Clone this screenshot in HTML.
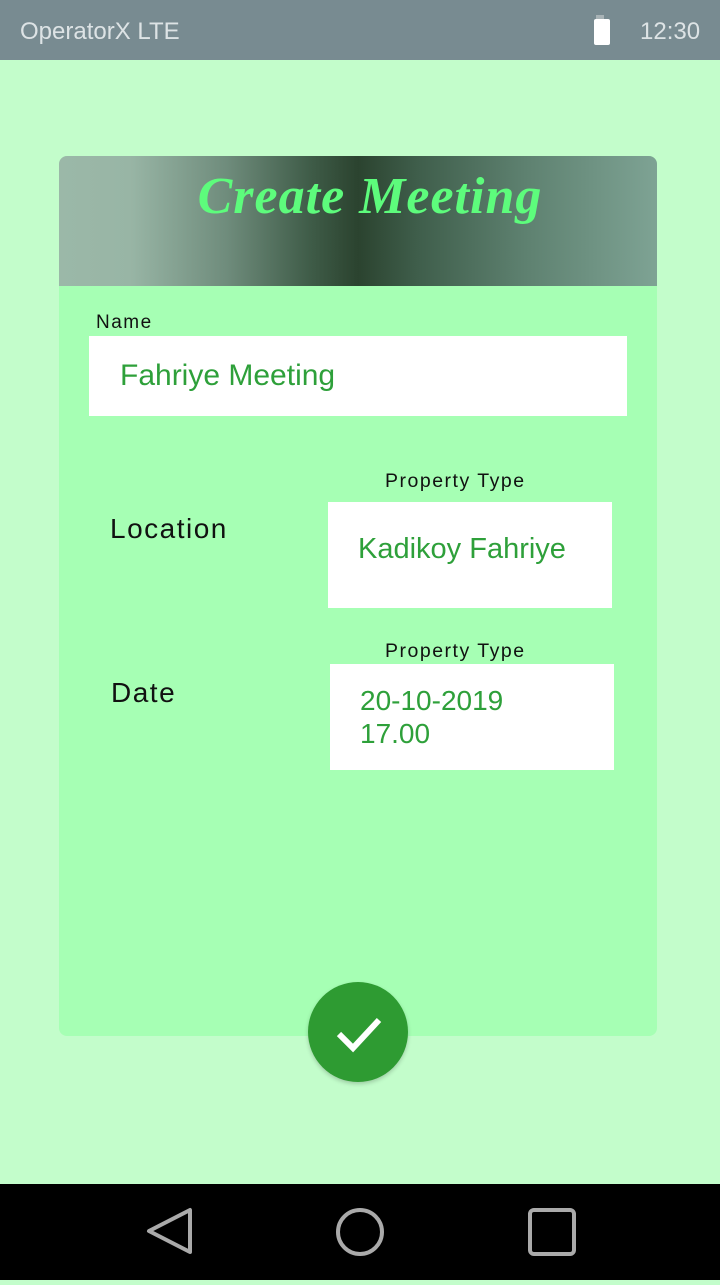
<!DOCTYPE html>
<html><head><style>
body{margin:0;width:720px;height:1280px;background:#c3fdcb;position:relative;font-family:"Liberation Sans","DejaVu Sans",sans-serif;overflow:hidden}
.abs{position:absolute}
.sb{left:0;top:0;width:720px;height:60px;background:#788b91;color:#dde3e5;font-size:24px}
.card{left:59px;top:156px;width:598px;height:880px;background:#a6ffb4;border-radius:8px;overflow:hidden}
.hdr{left:0;top:0;width:598px;height:130px;background:linear-gradient(90deg,#9bb8a8 0%,#98b5a5 12%,#6f8c7c 28%,#3f5c48 42%,#2b432f 50%,#3f5e4b 60%,#5e8170 78%,#7ea394 100%)}
.title{left:12px;width:598px;top:11px;text-align:center;color:#5dfc7c;font:italic bold 52px "Liberation Serif",serif;letter-spacing:1px}
.box{background:#fff;color:#2ea03a;font-size:28px}
.lbl{color:#111;letter-spacing:1.5px}
.nav{left:0;top:1184px;width:720px;height:96px;background:#000}
</style></head><body>
<div class="abs sb"><span class="abs" style="left:20px;top:18px">OperatorX LTE</span>
<div class="abs" style="left:596px;top:15px;width:8px;height:4px;background:#a8b3b6"></div>
<div class="abs" style="left:594px;top:19px;width:16px;height:26px;background:#fff;border-radius:2px"></div>
<span class="abs" style="left:640px;top:18px">12:30</span></div>
<div class="abs card">
<div class="abs hdr"><div class="abs title">Create Meeting</div></div>
<div class="abs lbl" style="left:37px;top:156px;font-size:19px">Name</div>
<div class="abs box" style="left:30px;top:180px;width:538px;height:80px"><span class="abs" style="left:31px;top:23px;font-size:30px">Fahriye Meeting</span></div>
<div class="abs lbl" style="left:326px;top:314px;font-size:19.5px">Property Type</div>
<div class="abs lbl" style="left:51px;top:357px;font-size:28px">Location</div>
<div class="abs box" style="left:269px;top:346px;width:284px;height:106px"><span class="abs" style="left:30px;top:31px;font-size:29px">Kadikoy Fahriye</span></div>
<div class="abs lbl" style="left:326px;top:484px;font-size:19.5px">Property Type</div>
<div class="abs lbl" style="left:52px;top:521px;font-size:28px">Date</div>
<div class="abs box" style="left:271px;top:508px;width:284px;height:106px"><span class="abs" style="left:30px;top:20px;line-height:33px">20-10-2019<br>17.00</span></div>
</div>
<div class="abs" style="left:308px;top:982px;width:100px;height:100px;border-radius:50%;background:#2e9b32;box-shadow:0 2px 4px rgba(0,0,0,.2)">
<svg width="100" height="100"><path d="M31 52 L45 66 L71 38" stroke="#fff" stroke-width="6" fill="none"/></svg></div>
<div class="abs nav"><svg width="720" height="96">
<path d="M190 26 L190 68 L149 47 Z" fill="none" stroke="#aaa" stroke-width="4" stroke-linejoin="round"/>
<circle cx="360" cy="48" r="22" fill="none" stroke="#aaa" stroke-width="4"/>
<rect x="530" y="26" width="44" height="44" rx="4" fill="none" stroke="#aaa" stroke-width="4"/>
</svg></div>
</body></html>
